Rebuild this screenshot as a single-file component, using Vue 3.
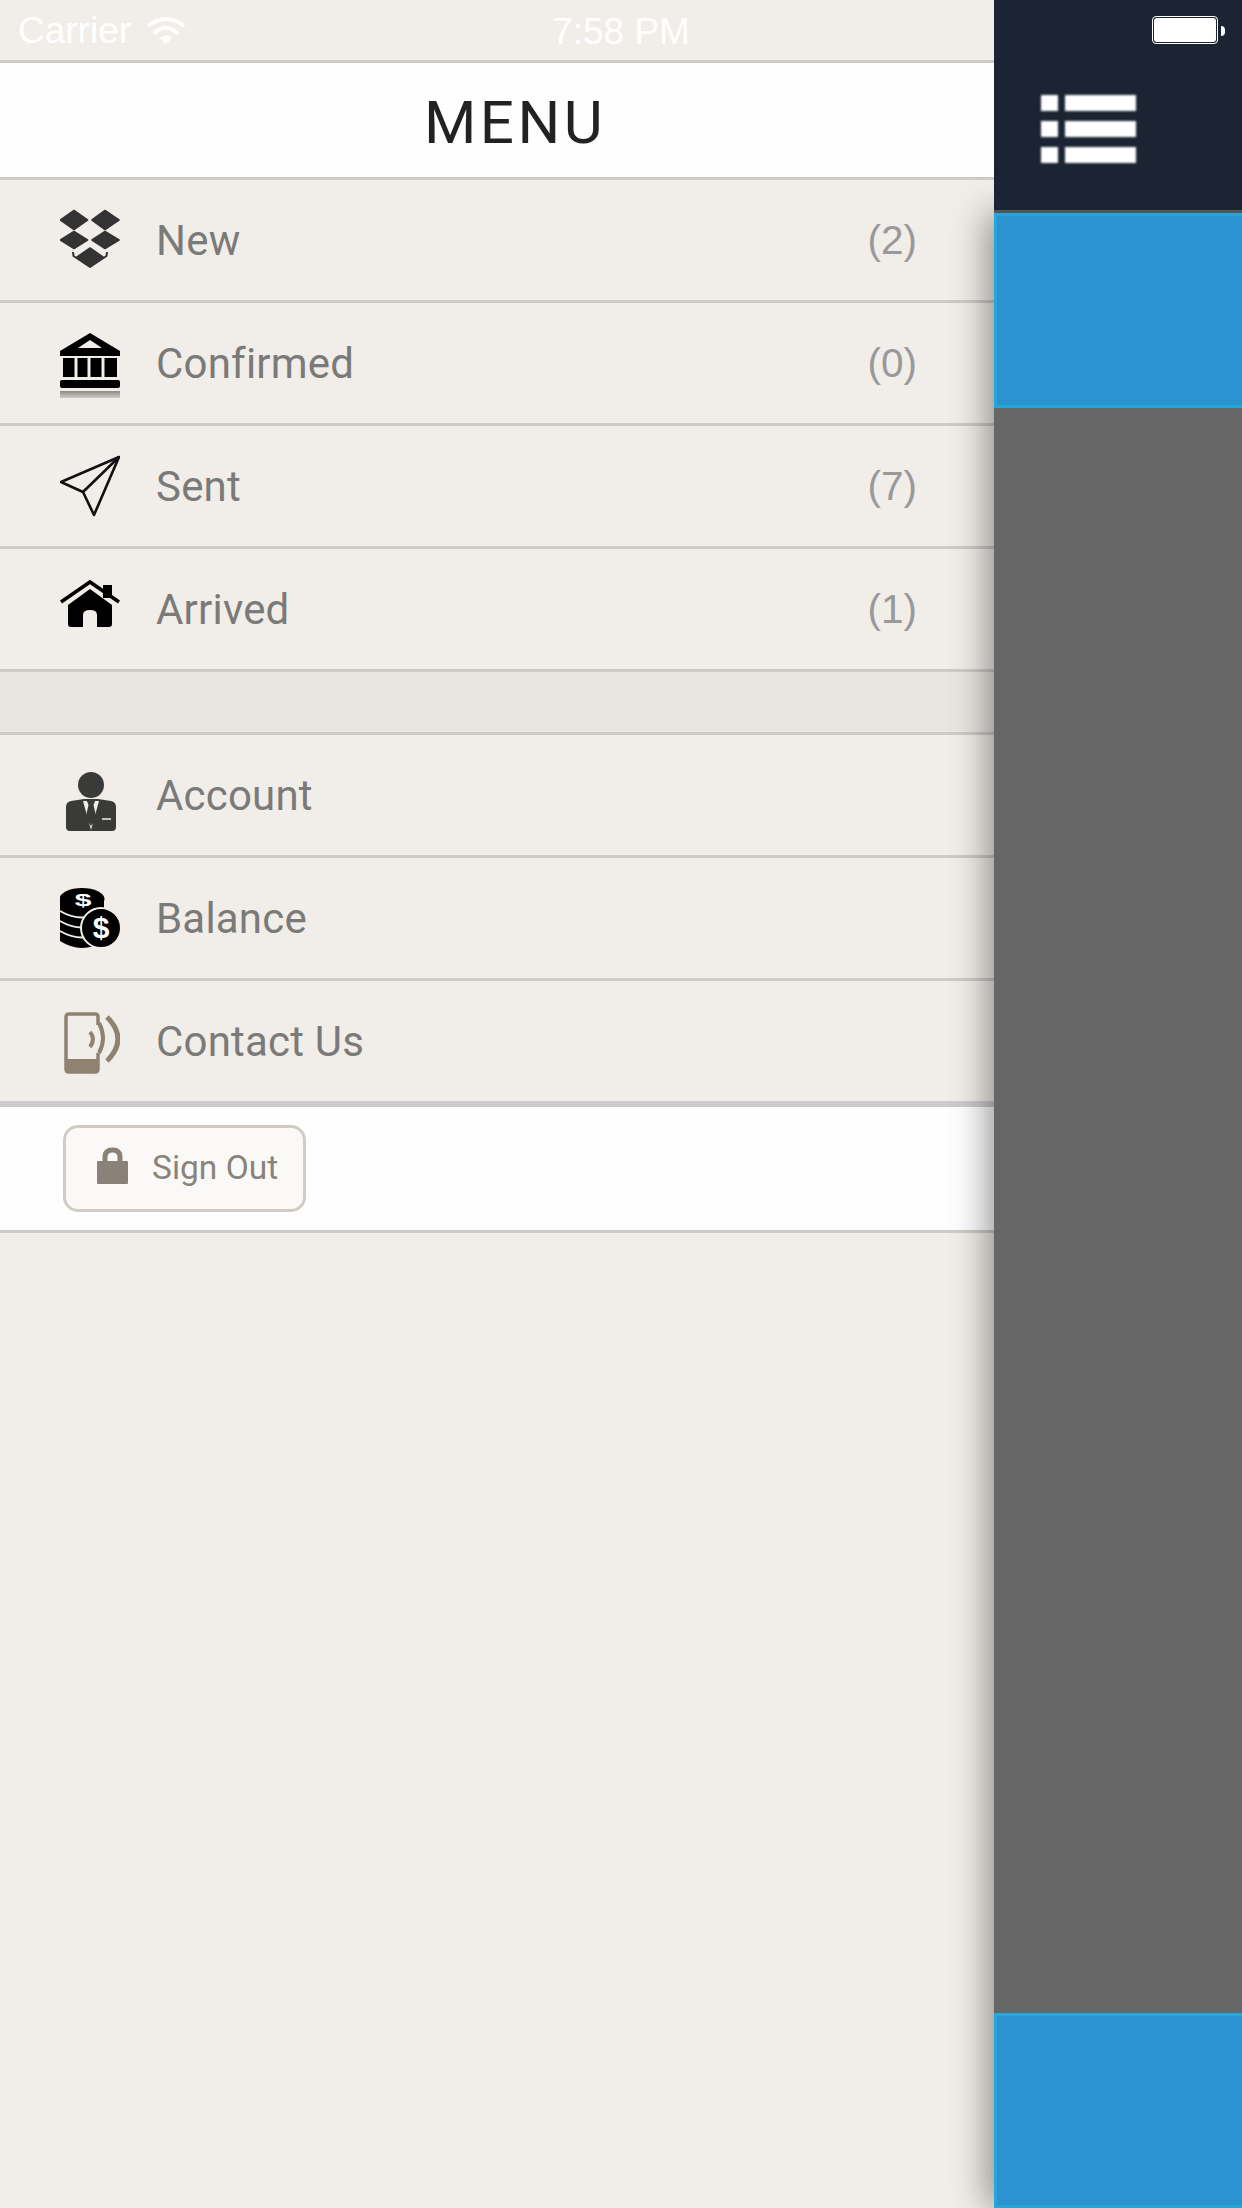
<script setup>
const topRows = [
  { label: 'New', count: '(2)', icon: 'box' },
  { label: 'Confirmed', count: '(0)', icon: 'bank' },
  { label: 'Sent', count: '(7)', icon: 'plane' },
  { label: 'Arrived', count: '(1)', icon: 'house' },
]
const bottomRows = [
  { label: 'Account', icon: 'person' },
  { label: 'Balance', icon: 'coins' },
  { label: 'Contact Us', icon: 'phone' },
]
const rows = [...topRows, null, ...bottomRows]
</script>

<template>
  <div class="screen">
    <div class="drawer">
      <div class="status">
        <span class="carrier">Carrier</span>
        <svg class="wifi" width="38" height="28" viewBox="0 0 38 28">
          <path d="M1 10 Q19 -4 37 10" fill="none" stroke="#fff" stroke-width="4" />
          <path d="M7 17.500 Q19 6 31 17.500" fill="none" stroke="#fff" stroke-width="4" />
          <path d="M13 22 Q19 17 25 22 L19 28 Z" fill="#fff" />
        </svg>
      </div>
      <div class="title"><span>MENU</span></div>

      <template v-for="(row, i) in rows" :key="i">
        <div v-if="!row" class="gap"></div>
        <div v-else class="row" :class="{ last: row.icon === 'phone' }">
          <svg class="icon" width="60" height="80" viewBox="0 0 60 80">
            <defs v-if="row.icon === 'bank'">
              <linearGradient id="bankShade" x1="0" y1="0" x2="0" y2="1">
                <stop offset="0" stop-color="#8c8a85" />
                <stop offset="1" stop-color="#cfccc6" />
              </linearGradient>
            </defs>
            <g v-if="row.icon === 'box'" fill="#333" stroke="#333" stroke-width="1.600" stroke-linejoin="round">
              <polygon points="14,10.500 27.500,20 14,29.500 0.500,20" />
              <polygon points="45,10.500 59,20 45,29.500 32,20" />
              <polygon points="14,31.500 27.500,40 14,48.500 0.500,40" />
              <polygon points="45,31.500 59,40 45,48.500 32,40" />
              <polygon points="30,48 43,57 30,66 17,57" />
              <path d="M13 52 L13.500 56 L30 67 L46.500 56 L47 52" fill="none" stroke-width="2" />
            </g>
            <g v-if="row.icon === 'bank'">
              <path fill-rule="evenodd" d="M30 10 L60 28 L60 33 L0 33 L0 28 Z M30 17 L18 25 L42 25 Z" fill="#000" />
              <path d="M3 35 H14.500 V54 H3 Z M17.500 35 H27.500 V54 H17.500 Z M30.500 35 H41.500 V54 H30.500 Z M44.500 35 H57 V54 H44.500 Z" fill="#000" />
              <rect x="0" y="57" width="60" height="8" rx="2" fill="#000" />
              <rect x="0" y="68" width="60" height="7" fill="url(#bankShade)" />
            </g>
            <g v-if="row.icon === 'plane'" fill="none" stroke="#111" stroke-width="2.600" stroke-linejoin="round">
              <path d="M59 11 L1 36 L23 46 L34 69 Z" />
              <path d="M59 11 L23 46" />
            </g>
            <g v-if="row.icon === 'house'">
              <path d="M1 33 L30 13 L59 33" fill="none" stroke="#000" stroke-width="3.500" />
              <rect x="43" y="16" width="9" height="13" fill="#000" />
              <path fill-rule="evenodd" d="M30 20 L52 36 V55 Q52 58 49 58 H37 V46 Q37 41 30 41 Q23 41 23 46 V58 H11 Q8 58 8 55 V36 Z" fill="#000" />
            </g>
            <g v-if="row.icon === 'person'">
              <circle cx="31" cy="30" r="13" fill="#3a3a38" />
              <path d="M11 46 L24 44 H38 L51 46 Q56 47 56 52 V72 Q56 76 52 76 H10 Q6 76 6 72 V52 Q6 47 11 46 Z" fill="#3a3a38" />
              <path d="M23 46 H39 L31 75 Z" fill="#f1eee9" />
              <path d="M26.500 45 H35.500 L33.500 50 L36.500 63 L31 71 L25.500 63 L28.500 50 Z" fill="#3a3a38" />
              <path d="M42 64 H51" stroke="#f1eee9" stroke-width="1.500" />
            </g>
            <g v-if="row.icon === 'coins'">
              <path d="M0 22 H44 V63 Q22 77 0 63 Z" fill="#000" />
              <path d="M0 33 Q22 46 44 33 M0 43 Q22 56 44 43 M0 53 Q22 66 44 53" fill="none" stroke="#f1eee9" stroke-width="1.800" />
              <ellipse cx="22" cy="21" rx="22.500" ry="11" fill="#000" />
              <text class="dollar small" transform="translate(23 27.500) scale(1.500 0.800)">$</text>
              <circle cx="41" cy="50" r="20" fill="#000" stroke="#f1eee9" stroke-width="2" />
              <text x="41" y="60" class="dollar">$</text>
            </g>
            <g v-if="row.icon === 'phone'" fill="none" stroke="#8f8270">
              <path d="M38 24 V16 Q38 13 35 13 H9 Q6 13 6 16 V68 Q6 71 9 71 H35 Q38 71 38 68 V52" stroke-width="3.500" />
              <path d="M5 58 H39 V69 Q39 72 36 72 H8 Q5 72 5 69 Z" fill="#8f8270" stroke="none" />
              <path d="M30 31 Q36 38 30 46" stroke-width="4" />
              <path d="M39 22 Q47 37 39 52" stroke-width="4" />
              <path d="M47 16 Q69 38 47 60" stroke-width="5" />
            </g>
          </svg>
          <span class="label">{{ row.label }}</span>
          <span v-if="row.count" class="count">{{ row.count }}</span>
        </div>
      </template>

      <div class="signout">
        <div class="signout-btn">
          <svg class="lock" width="31" height="37" viewBox="0 0 31 37">
            <path d="M8 16 V10 Q8 3 15.500 3 Q23 3 23 10 V16" fill="none" stroke="#8a8178" stroke-width="5" />
            <rect x="0" y="14" width="31" height="23" rx="1" fill="#8a8178" />
          </svg>
          <span>Sign Out</span>
        </div>
      </div>
    </div>

    <div class="side">
      <div class="side-top">
        <div class="battery"><i></i></div>
        <div class="burger">
          <div v-for="n in 3" :key="n" class="burger-line"><i></i><b></b></div>
        </div>
      </div>
      <div class="side-body">
        <div class="blue"></div>
        <div class="blue"></div>
      </div>
    </div>

    <div class="clock">7:58 PM</div>
  </div>
</template>

<style>
html, body { margin: 0; background: #f1eee9; }
</style>

<style scoped>
.screen {
  position: relative;
  display: flex;
  width: 1242px;
  height: 2208px;
  overflow: hidden;
  font-family: Roboto, sans-serif;
  background: #f1eee9;
}
.drawer {
  width: 994px;
  flex: none;
  display: flex;
  flex-direction: column;
}
.status {
  height: 60px;
  display: flex;
  align-items: center;
  gap: 16px;
  padding-left: 18px;
  color: #fff;
  font: 37px "Liberation Sans", sans-serif;
}
.carrier { margin-top: 2px; }
.clock {
  position: absolute;
  top: 0;
  left: 0;
  width: 1242px;
  height: 60px;
  text-align: center;
  color: #fff;
  font: 37px/64px "Liberation Sans", sans-serif;
}
.title {
  height: 120px;
  box-sizing: border-box;
  display: flex;
  align-items: center;
  justify-content: center;
  padding: 4px 0 0 36px;
  background: #fefefe;
  border-top: 3px solid #cdcbc6;
  border-bottom: 3px solid #cdcbc6;
  color: #222;
  font-size: 60px;
  letter-spacing: 3.500px;
}
.row {
  height: 120px;
  display: flex;
  align-items: center;
  padding: 0 77px 0 60px;
  border-bottom: 3px solid #cdcbc6;
}
.row.last { border-bottom-width: 6px; border-bottom-color: #ccc; }
.gap {
  height: 60px;
  background: #e9e6e1;
  border-bottom: 3px solid #cdcbc6;
}
.icon { flex: none; margin-right: 36px; }
.label { flex: 1; color: #7a7a78; font-size: 42px; letter-spacing: 0.200px; }
.count { color: #999; font: 40.500px "Liberation Sans", sans-serif; }
.dollar {
  fill: #fff;
  font: bold 30px "Liberation Sans", sans-serif;
  text-anchor: middle;
}
.dollar.small { font-size: 20px; }
.signout {
  height: 123px;
  display: flex;
  align-items: center;
  padding-left: 63px;
  background: #fefefe;
  border-bottom: 3px solid #cdcbc6;
}
.signout-btn {
  width: 243px;
  height: 87px;
  box-sizing: border-box;
  display: flex;
  align-items: center;
  gap: 24px;
  padding-left: 31px;
  border: 3px solid #d0ccc4;
  border-radius: 15px;
  background: #fbf9f7;
  color: #8a837b;
  font-size: 33.500px;
}
.lock { margin-top: -7px; }
.signout-btn span { margin-top: -2px; }
.side {
  flex: 1;
  display: flex;
  flex-direction: column;
}
.side-top {
  position: relative;
  z-index: 2;
  height: 210px;
  background: #1c2433;
  border-bottom: 3px solid #555;
}
.battery {
  position: absolute;
  top: 16px;
  left: 158px;
  width: 66px;
  height: 28px;
  box-sizing: border-box;
  padding: 1px;
  border: 1px solid #fff;
  border-radius: 4px;
}
.battery i {
  display: block;
  height: 100%;
  background: #fff;
  border-radius: 3px;
}
.battery::after {
  content: '';
  position: absolute;
  left: 68px;
  top: 9px;
  width: 4px;
  height: 10px;
  background: #fff;
  border-radius: 0 4px 4px 0;
}
.burger {
  position: absolute;
  left: 47px;
  top: 95px;
  display: flex;
  flex-direction: column;
  gap: 10px;
  filter: blur(1px);
}
.burger-line { display: flex; gap: 7px; height: 16px; }
.burger-line i { width: 17px; background: #fff; }
.burger-line b { width: 71px; background: #fff; }
.side-body {
  flex: 1;
  display: flex;
  flex-direction: column;
  justify-content: space-between;
  background: #666;
  box-shadow: -6px 0 34px rgba(0, 0, 0, 0.42);
}
.blue {
  height: 195px;
  box-sizing: border-box;
  background: #2b93cf;
  border: 3px solid #27a6da;
  border-right: none;
}
</style>
